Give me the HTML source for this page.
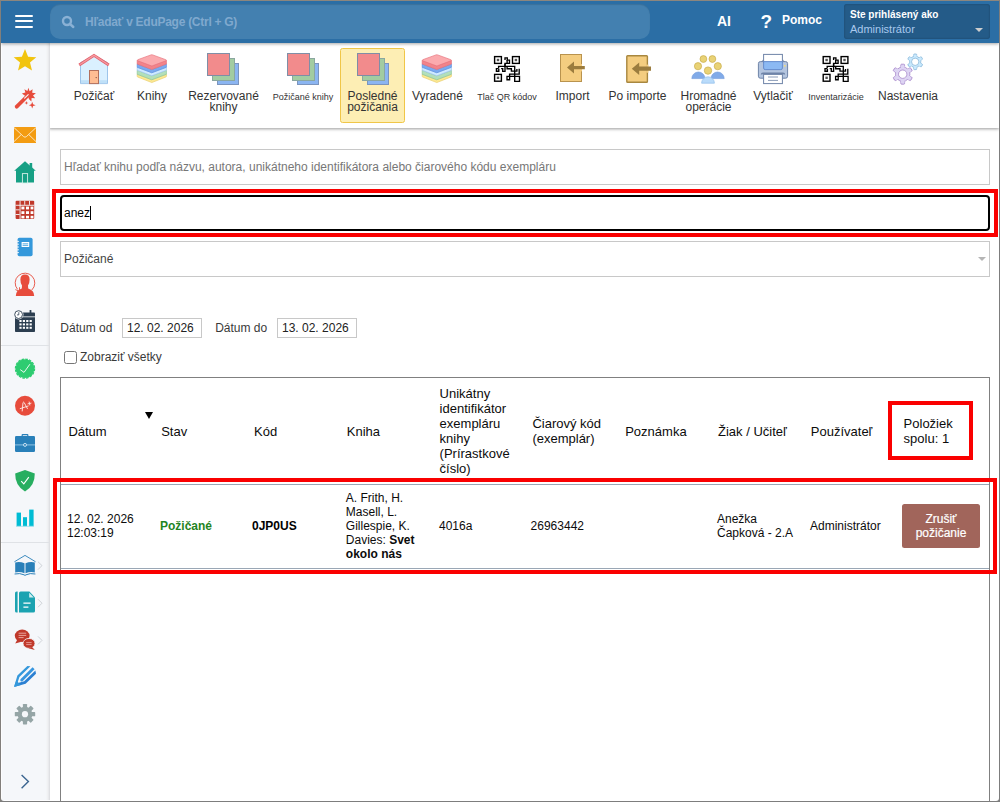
<!DOCTYPE html>
<html lang="sk">
<head>
<meta charset="utf-8">
<title>EduPage - Knižnica</title>
<style>
*{box-sizing:border-box;margin:0;padding:0}
html,body{width:1000px;height:802px;overflow:hidden;background:#fff}
body{font-family:"Liberation Sans",Arial,sans-serif;font-size:12px;color:#222;position:relative}
#frame{position:absolute;left:0;top:0;width:1000px;height:802px;border:1px solid #7d7d7d;border-top-color:#8c867e;border-left-color:#827f7b;z-index:50;pointer-events:none;overflow:hidden}
#frame:after{content:"";position:absolute;left:0;top:0;right:0;bottom:0;border-radius:0 0 3px 3px;box-shadow:0 0 0 3px #7d7d7d}
#header{position:absolute;left:1px;top:1px;width:998px;height:42px;background:#2b6ea5;z-index:10;box-shadow:0 1px 3px rgba(0,0,0,.35)}
#burger{position:absolute;left:13.5px;top:13.5px;width:18px;height:13px}
#burger i{position:absolute;left:0;width:18px;height:2px;background:#fff;border-radius:1px}
#gsearch{position:absolute;left:48.8px;top:3.3px;width:600px;height:34.9px;border-radius:10px;background:#4380b0;box-shadow:inset 0 1px 1px rgba(0,0,0,.12);color:#80a9ce;font-weight:bold;font-size:12px}
#gsearch span{position:absolute;left:35.2px;top:10.7px;white-space:nowrap;letter-spacing:-0.27px}
.hl{position:absolute;color:#fff;font-weight:bold;white-space:nowrap}
#user{position:absolute;left:843px;top:3px;width:146px;height:35px;border-radius:3px;background:#245b88;box-shadow:inset 0 0 2px rgba(0,0,0,.3)}
#user b{position:absolute;left:6px;top:5px;font-size:10px;color:#fff;white-space:nowrap}
#user span{position:absolute;left:6px;top:19px;font-size:11px;color:#a9c9ee;white-space:nowrap}
#user i{position:absolute;left:131px;top:24.3px;width:0;height:0;border-left:4px solid transparent;border-right:4px solid transparent;border-top:4.6px solid #cdcdcd}
#side{position:absolute;left:1px;top:43px;width:49px;height:758px;background:linear-gradient(to right,#f5f7fa 0,#f5f7fa 43.5px,#f3f5f7 44.5px,#f0f1f3 45.5px,#e9eaed 46.5px,#dfe0e3 47.5px,#dedfe2 48px);border-left:1px solid #fdfdfe;border-bottom:1px solid #fdfdfe;z-index:5}
#side svg{position:absolute;left:-1px !important}
#side hr{position:absolute;left:0;width:48px;border:0;border-top:1px solid #e3e6ea}
#toolbar{position:absolute;left:49px;top:43px;width:950px;height:85px;background:#fff;box-shadow:0 1px 3px rgba(0,0,0,.4);z-index:4}
.tl{position:absolute;top:48px;width:120px;text-align:center;font-size:12px;line-height:11px;color:#333;white-space:nowrap}
.tl.sm{font-size:9px;top:49px}
#tsel{position:absolute;left:291px;top:5px;width:65px;height:75px;background:#fdeeb4;border:1px solid #f0c648;border-radius:2.5px}
#main{position:absolute;left:49px;top:128px;width:950px;height:673px;background:#fff}
.inp{position:absolute;left:11px;width:930px;height:36px;border:1px solid #c8c8c8;background:#fff;font-size:12px;line-height:34px;padding-left:3px;color:#777}
.red{position:absolute;border:4px solid #fa0000}
.lbl{position:absolute;font-size:12px;color:#3a3a3a;white-space:nowrap}
.dt{position:absolute;height:20px;width:80px;border:1px solid #c8c8c8;font-size:12px;line-height:18px;padding-left:4px;color:#222}
#tbl{position:absolute;left:11px;top:249px;width:930px;height:430px;border:1px solid #808080;border-bottom:0}
.th{position:absolute;top:250px;height:106px;display:flex;align-items:center;font-size:13px;line-height:15px;color:#0c0c0c}
.td{position:absolute;top:356px;height:84px;display:flex;align-items:center;font-size:12px;line-height:14px;color:#0c0c0c}
.td b{font-weight:bold}
.rl{position:absolute;left:12px;width:928px;height:1px;background:#9aa7b5}
#btn{position:absolute;left:853px;top:376px;width:78px;height:44px;border-radius:2.5px;-webkit-text-stroke:0.2px #fff;background:#a1655b;color:#fff;font-size:12px;font-weight:normal;line-height:14px;text-align:center;padding-top:8px}
</style>
</head>
<body>
<div id="header">
  <div id="burger"><i style="top:0"></i><i style="top:5.5px"></i><i style="top:11px"></i></div>
  <div id="gsearch">
    <svg width="16" height="16" viewBox="0 0 16 16" style="position:absolute;left:11.2px;top:10.8px"><circle cx="6" cy="6" r="4" fill="none" stroke="#8ab1d5" stroke-width="2.4"/><path d="M9 9 L12.3 12" stroke="#8ab1d5" stroke-width="2.4" stroke-linecap="round"/></svg>
    <span>Hľadať v EduPage (Ctrl + G)</span>
  </div>
  <div class="hl" style="left:716px;top:12px;font-size:14px">AI</div>
  <div class="hl" style="left:759.5px;top:9.5px;font-size:19px">?</div>
  <div class="hl" style="left:781px;top:12px;font-size:12px">Pomoc</div>
  <div id="user"><b>Ste prihlásený ako</b><span>Administrátor</span><i></i></div>
</div>

<div id="side">
<svg width="48" height="758" viewBox="1 43 48 758" style="left:0;top:0">
  <!-- star -->
  <polygon fill="#f1c40f" points="25.0,49.1 28.1,56.7 36.3,57.3 30.0,62.6 32.0,70.6 25.0,66.3 18.0,70.6 20.0,62.6 13.7,57.3 21.9,56.7"/>
  <!-- wand -->
  <g fill="#e74c3c">
    <path d="M15.2 105.6 L26.6 94.2 L29.2 96.8 L17.8 108.2 Q16.5 109.2 15.3 108.1 Q14.2 106.9 15.2 105.6Z"/>
    <polygon points="28.4,87.8 29.6,91.2 32.6,89.2 32.2,92.8 35.9,93.2 33,95.4 35.2,98.2 31.6,98 31.4,101.6 28.9,99 28,96 25,95.8 21.9,93.6 25.4,92.6 24.4,89.2 27.4,91"/>
    <polygon points="32.2,101.8 33.1,104.3 35.6,105.2 33.1,106.1 32.2,108.6 31.3,106.1 28.8,105.2 31.3,104.3"/>
    <polygon points="26.4,101 26.9,102.4 28.3,102.9 26.9,103.4 26.4,104.8 25.9,103.4 24.5,102.9 25.9,102.4"/>
  </g>
  <path d="M24.6 98.2 L28.2 94.6" stroke="#f5f7fa" stroke-width="1.1" stroke-linecap="round"/>
  <!-- mail -->
  <rect x="14" y="127" width="22" height="16" fill="#f39c12"/>
  <path d="M14 127.6 L23.6 136.6 Q25 137.8 26.4 136.6 L36 127.6 M14 141.6 L21.2 134.6 M36 141.6 L28.8 134.6" fill="none" stroke="#fdebd0" stroke-width="0.9"/>
  <!-- home -->
  <g fill="#16a085">
    <polygon points="25,161.3 35.8,170.8 14.2,170.8"/>
    <rect x="16" y="169.5" width="18" height="13"/>
    <rect x="29.6" y="163" width="2.6" height="6"/>
  </g>
  <rect x="22.4" y="173.6" width="5.2" height="9.4" fill="#16a085" stroke="#d5efe9" stroke-width="0.9"/>
  <!-- grid -->
  <g fill="#c0392b">
    <rect x="15.6" y="200.8" width="18.6" height="18.2" rx="1"/>
  </g>
  <g fill="#f5f7fa">
    <rect x="19.6" y="200.8" width="0.9" height="18.2"/><rect x="24.3" y="200.8" width="0.9" height="4"/><rect x="29" y="200.8" width="0.9" height="4"/>
    <rect x="15.6" y="204.8" width="18.6" height="0.9"/><rect x="15.6" y="209.4" width="4" height="0.9"/><rect x="15.6" y="214" width="4" height="0.9"/>
  </g>
  <g fill="#fff">
    <rect x="21.4" y="206.6" width="3" height="2.8"/><rect x="26" y="206.6" width="3" height="2.8"/><rect x="30.6" y="206.6" width="2.8" height="2.8"/>
    <rect x="21.4" y="211.2" width="3" height="2.8"/><rect x="26" y="211.2" width="3" height="2.8"/><rect x="30.6" y="211.2" width="2.8" height="2.8"/>
    <rect x="21.4" y="215.8" width="3" height="2.6"/><rect x="26" y="215.8" width="3" height="2.6"/><rect x="30.6" y="215.8" width="2.8" height="2.6"/>
  </g>
  <!-- notebook -->
  <rect x="17.6" y="237.8" width="15" height="18.4" rx="1.8" fill="#3498db"/>
  <g stroke="#f5f7fa" stroke-width="0.9"><path d="M16.4 241.4h2.6M16.4 244.2h2.6M16.4 247h2.6M16.4 249.8h2.6M16.4 252.6h2.6"/></g>
  <rect x="21.6" y="242" width="7.6" height="5" fill="#fff"/>
  <path d="M22.6 243.8h5.6M22.6 245.4h5.6" stroke="#3498db" stroke-width="0.8"/>
  <!-- person -->
  <g fill="#e74c3c">
    <path d="M20.4 279.6 Q20.4 274.6 25 274.6 Q29.6 274.6 29.6 279.6 Q29.6 283.6 28 285.6 L28.2 288.6 Q34.2 290.6 34.2 296 H15.8 Q15.8 290.6 21.8 288.6 L22 285.6 Q20.4 283.6 20.4 279.6Z"/>
  </g>
  <path d="M31.8 290 A9.8 9.8 0 1 0 17.6 289.4" fill="none" stroke="#e74c3c" stroke-width="0.9"/>
  <path d="M15.4 289.6 L19.4 291.4 L19.6 287.2" fill="none" stroke="#e74c3c" stroke-width="0.9"/>
  <!-- calendar -->
  <g fill="#2c3e50">
    <rect x="15" y="312.4" width="20" height="19.6" rx="0.8"/>
    <rect x="29.6" y="310" width="1.8" height="4.4" rx="0.6"/>
  </g>
  <path d="M22.4 316.8h12.6" stroke="#f5f7fa" stroke-width="0.8"/>
  <circle cx="18.6" cy="314.6" r="4.3" fill="#f5f7fa" stroke="#f5f7fa" stroke-width="1.2"/>
  <circle cx="18.6" cy="314.6" r="3.9" fill="#fff" stroke="#2c3e50" stroke-width="0.9"/>
  <path d="M18.8 312.2V314.9H17" fill="none" stroke="#2c3e50" stroke-width="0.8"/>
  <g fill="#fff">
    <rect x="19.4" y="320" width="2.2" height="2"/><rect x="22.8" y="320" width="2.2" height="2"/><rect x="26.2" y="320" width="2.2" height="2"/><rect x="29.6" y="320" width="2.2" height="2"/>
    <rect x="19.4" y="323.4" width="2.2" height="2"/><rect x="22.8" y="323.4" width="2.2" height="2"/><rect x="26.2" y="323.4" width="2.2" height="2"/><rect x="29.6" y="323.4" width="2.2" height="2"/>
    <rect x="19.4" y="326.8" width="2.2" height="2"/><rect x="22.8" y="326.8" width="2.2" height="2"/><rect x="26.2" y="326.8" width="2.2" height="2"/><rect x="29.6" y="326.8" width="2.2" height="2"/>
  </g>
  <!-- hr -->
  <rect x="1" y="345" width="48" height="1" fill="#dfe2e6"/>
  <!-- check badge -->
  <circle cx="25" cy="368.6" r="9.4" fill="#2ecc71"/>
  <circle cx="25" cy="368.6" r="9.5" fill="none" stroke="#2ecc71" stroke-width="1.4" stroke-dasharray="2.6 1.13"/>
  <path d="M20.2 369.6 L24 372.4 L29.9 364.2" fill="none" stroke="#f2fbf5" stroke-width="0.95"/>
  <!-- A+ -->
  <circle cx="25" cy="405.8" r="10" fill="#e74c3c"/>
  <path d="M22.2 411 L23 402.6 Q23.6 401.6 24.2 402.6 L27.4 408.6 M20.2 408.6 L28.2 406 M28 403.8 L31 403.2 M29.2 402 L29.8 405" fill="none" stroke="#fbe6e3" stroke-width="0.95" stroke-linecap="round"/>
  <!-- briefcase -->
  <g fill="#2980b9">
    <rect x="15" y="436" width="20" height="16" rx="1.2"/>
    <path d="M21.6 436.4v-1.4q0-1 1-1h4.8q1 0 1 1v1.4h-1.2v-1.2h-4.4v1.2z"/>
  </g>
  <rect x="15" y="444.4" width="20" height="1" fill="#8fc0e2"/>
  <circle cx="25" cy="444.9" r="1.5" fill="#2980b9" stroke="#d6e9f5" stroke-width="0.9"/>
  <!-- shield -->
  <path d="M25 470 L34.8 473.4 Q35 485.6 25 491.4 Q15 485.6 15.2 473.4Z" fill="#27ae60"/>
  <path d="M21.2 481.2 L23.8 483.8 L28.8 477.2" fill="none" stroke="#fff" stroke-width="1.1"/>
  <!-- chart -->
  <g fill="#00bcd4">
    <rect x="16.6" y="512.6" width="4.4" height="13.6"/><rect x="23" y="517.2" width="4" height="9"/><rect x="29.2" y="509.6" width="4.4" height="16.6"/>
  </g>
  <rect x="16" y="525.8" width="18" height="0.8" fill="#8fdde8"/>
  <!-- hr -->
  <rect x="1" y="542" width="48" height="1" fill="#dfe2e6"/>
  <!-- book -->
  <path d="M14.4 561.8 L25 555.4 L35.6 561.8" fill="none" stroke="#2980b9" stroke-width="0.9"/>
  <g fill="#2980b9">
    <path d="M15.2 562.4 Q20 561.4 24.5 563.2 V573.2 Q20 571.4 15.2 572.4Z"/>
    <path d="M34.8 562.4 Q30 561.4 25.5 563.2 V573.2 Q30 571.4 34.8 572.4Z"/>
  </g>
  <path d="M14.6 574 Q20 572.8 24 574.8 Q25 576 26 574.8 Q30 572.8 35.4 574" fill="none" stroke="#2980b9" stroke-width="1"/>
  <!-- doc -->
  <g fill="#1ba3b1">
    <path d="M17.6 591.6 V612.6 H16.6 Q15 612.6 15 611 V593.2 Q15 591.6 16.6 591.6Z"/>
    <path d="M19 593.2 Q19 591.6 20.6 591.6 H29.4 L35 597.4 V611 Q35 612.6 33.4 612.6 H19Z"/>
  </g>
  <path d="M29.2 592.8 V597.6 H33.8Z" fill="#d3eef1"/>
  <path d="M23.4 603.2h7.2M23.4 607.2h5" stroke="#fff" stroke-width="1.3"/>
  <!-- chat -->
  <g fill="#c0392b">
    <ellipse cx="22.2" cy="635.8" rx="7.4" ry="6.2"/>
    <path d="M17.4 639.6 L15.2 643.6 L21.4 641.8Z"/>
    <ellipse cx="29" cy="643.4" rx="6" ry="5" stroke="#f5f7fa" stroke-width="0.8"/>
    <path d="M32 647 L34.8 650 L28.6 648.3Z"/>
  </g>
  <path d="M18.6 633.2h7.6M18.6 635.4h7.6M18.6 637.6h5" stroke="#eeb0a9" stroke-width="0.9"/>
  <path d="M26.2 642.6h5.4M26.2 644.6h5.4" stroke="#eeb0a9" stroke-width="0.8"/>
  <!-- chevrons -->
  <g fill="none" stroke="#cfd3d8" stroke-width="1">
    <path d="M38 561.8 L42 565.6 L38 569.6"/><path d="M38 599.2 L42 603.2 L38 607.2"/><path d="M38 636.4 L42 640.4 L38 644.4"/>
  </g>
  <!-- pen -->
  <g>
    <path d="M14 687 L17.4 675.6 L27.4 666 L30.4 666.2 L19.4 677 L17.6 682.4Z" fill="#3498db"/>
    <path d="M14 687 L25.6 683.8 L36 673.8 L35.4 670.6 L24.2 681.2 L18.8 682.8Z" fill="#2b80d2"/>
    <path d="M20.7 679 L32.6 667.2 L34.6 669.2 L22.8 681 Q21.4 682 20.6 681 Q19.8 680 20.7 679Z" fill="#3796df"/>
    <path d="M14 687 L16.3 680.4 L20.8 684.9Z" fill="#3498db"/>
  </g>
  <!-- gear -->
  <g transform="translate(25 714.2)">
    <g fill="#95a5a6">
      <circle r="7.4"/>
      <g id="sgt"><rect x="-2.1" y="-10.2" width="4.2" height="4.4" rx="0.6"/></g>
      <rect x="-2.1" y="-10.2" width="4.2" height="4.4" rx="0.6" transform="rotate(45)"/>
      <rect x="-2.1" y="-10.2" width="4.2" height="4.4" rx="0.6" transform="rotate(90)"/>
      <rect x="-2.1" y="-10.2" width="4.2" height="4.4" rx="0.6" transform="rotate(135)"/>
      <rect x="-2.1" y="-10.2" width="4.2" height="4.4" rx="0.6" transform="rotate(180)"/>
      <rect x="-2.1" y="-10.2" width="4.2" height="4.4" rx="0.6" transform="rotate(225)"/>
      <rect x="-2.1" y="-10.2" width="4.2" height="4.4" rx="0.6" transform="rotate(270)"/>
      <rect x="-2.1" y="-10.2" width="4.2" height="4.4" rx="0.6" transform="rotate(315)"/>
    </g>
    <circle r="3.1" fill="#f5f7fa"/>
  </g>
  <!-- bottom chevron -->
  <path d="M21.6 775 L28.4 781.6 L21.6 788.2" fill="none" stroke="#3b6590" stroke-width="1.4"/>
</svg>
</div>

<div id="toolbar">
  <div id="tsel"></div>
<svg width="950" height="85" viewBox="49 43 950 85" style="position:absolute;left:0;top:0">
  <defs>
    <g id="stk">
      <rect x="10.5" y="10.5" width="21" height="21" fill="#8bb5f1" stroke="#7c95bd"/>
      <rect x="5.5" y="5.5" width="22" height="22" fill="#a2cca1" stroke="#8aa7a0"/>
      <rect x="0.5" y="0.5" width="22" height="22" fill="#f28b8c" stroke="#7f8ea6"/>
    </g>
    <g id="bks" stroke-linejoin="round">
      <path d="M0.6 19.65 L15.2 25.15 L29.8 19.65 V21.75 Q29.8 22.15 29.2 22.45 L15.2 27.95 L1.2 22.45 Q0.6 22.15 0.6 21.75Z" fill="#fde992" stroke="#e8cf6e" stroke-width="0.7"/>
      <path d="M0.6 15.65 L15.2 21.15 L29.8 15.65 V19.65 L15.2 25.15 L0.6 19.65Z" fill="#b2dfba" stroke="#8cc79a" stroke-width="0.7"/>
      <path d="M0.6 12.65 L15.2 18.15 L29.8 12.65 V15.65 L15.2 21.15 L0.6 15.65Z" fill="#cfeaff" stroke="#9dc6f0" stroke-width="0.7"/>
      <path d="M0.6 9.40 L15.2 14.90 L29.8 9.40 V12.65 L15.2 18.15 L0.6 12.65Z" fill="#7aaaf0" stroke="#5d8fe0" stroke-width="0.7"/>
      <path d="M0.6 5.70 L15.2 11.20 L29.8 5.70 V9.40 L15.2 14.90 L0.6 9.40Z" fill="#f2838a" stroke="#e4707a" stroke-width="0.7"/>
      <path d="M1.2 5.1 Q0.4 5.7 1.2 6.2 L14.4 11.1 Q15.2 11.4 16 11.1 L29.2 6.2 Q30 5.7 29.2 5.1 L16 0.3 Q15.2 0 14.4 0.3Z" fill="#fbaaae" stroke="#e8747e" stroke-width="0.7"/>
      </g>
    <g id="qr" fill="none" stroke="#000" stroke-width="1.4">
      <rect x="0.9" y="0.9" width="6.8" height="6.8"/><rect x="18.8" y="0.9" width="6.8" height="6.8"/><rect x="0.9" y="18.7" width="6.8" height="6.8"/>
      <g fill="#555" stroke="none"><rect x="3.1" y="3.1" width="2.4" height="2.4"/><rect x="21" y="3.1" width="2.4" height="2.4"/><rect x="3.1" y="20.9" width="2.4" height="2.4"/></g>
      <g stroke-width="1.35">
      <path d="M11.3 4.4V2.2H13.6V4.4H15.8V7.6H11.3V10.4"/>
      <path d="M13.4 4.4V7.4"/>
      <path d="M4.9 12.6V10.7H21V25.7H25.8V20.7H13.3V24H15.9V18.4H25.5V13"/>
      <path d="M4.9 12.9H2.7V15.5H5.1V13"/>
      <path d="M7.4 12.9H9V15.6H11.3V8"/>
      <path d="M13.4 10.8V13H17.7V15.4H23.2V13.2"/>
      </g>
    </g>
    <g id="gt6"><rect x="-1.9" y="-10" width="3.8" height="4" rx="0.8"/></g>
  </defs>
  <!-- house -->
  <path d="M80.5 62.6 L94 55.4 L107.5 62.6 V83.6 H80.5Z" fill="#daf0ff" stroke="#9dc4ea" stroke-width="1"/>
  <rect x="81" y="80.2" width="26" height="3" fill="#bfe0f8"/>
  <path d="M79.2 65 L94 55.4 L108.8 65" fill="none" stroke="#e45f6a" stroke-width="2.9" stroke-linejoin="miter"/>
  <path d="M79.6 64.8 L94 55.4 L108.4 64.8" fill="none" stroke="#f59aa0" stroke-width="1.3"/>
  <rect x="89.5" y="70.5" width="9" height="13.1" fill="#ffbd93" stroke="#b3705c" stroke-width="1"/>
  <circle cx="96.2" cy="77.6" r="0.7" fill="#7a4a3a"/>
  <!-- books -->
  <use href="#bks" x="136.6" y="54.6"/>
  <!-- stacks -->
  <use href="#stk" x="207" y="53"/>
  <use href="#stk" x="287" y="53"/>
  <use href="#stk" x="357" y="53"/>
  <use href="#bks" x="421.6" y="54.6"/>
  <use href="#qr" x="493.7" y="55.7"/>
  <!-- import -->
  <rect x="560.5" y="54.5" width="21" height="27" fill="#f4cd80" stroke="#b9934e"/>
  <rect x="580.6" y="64" width="1.4" height="7.4" fill="#f4cd80"/>
  <path d="M567 67.6 L574 61.6 V66 H584.8 V69.2 H574 V73.6Z" fill="#9b7c3e"/>
  <!-- po importe -->
  <rect x="626.8" y="55.8" width="20.6" height="26.4" rx="0.8" fill="#f4cd80" stroke="#a8873f" stroke-width="1.4"/>
  <rect x="646.4" y="64.6" width="2" height="8.2" fill="#f4cd80"/>
  <path d="M631.8 68.7 L639.2 62.4 V66.6 H651 V70.8 H639.2 V75Z" fill="#9b7c3e"/>
  <!-- people -->
  <g>
    <path d="M691.8 78.6 A6.6 6.6 0 0 1 705 78.6Z" fill="#80aae8" stroke="#6c97da" stroke-width="0.6"/>
    <path d="M711 78.6 A6.6 6.6 0 0 1 724.2 78.6Z" fill="#80aae8" stroke="#6c97da" stroke-width="0.6"/>
    <path d="M701.6 83.2 A6.4 6.4 0 0 1 714.4 83.2Z" fill="#b9dbfa" stroke="#8fbdeb" stroke-width="0.7"/>
    <g fill="#e9d275" stroke="#c9ae4e" stroke-width="0.7">
      <circle cx="703.4" cy="59" r="3.4"/><circle cx="712.4" cy="59" r="3.4"/>
      <circle cx="698" cy="66.2" r="3.6"/><circle cx="717.8" cy="66.2" r="3.6"/>
      <circle cx="708" cy="70.6" r="3.7"/>
    </g>
  </g>
  <!-- printer -->
  <g>
    <path d="M762.4 62.5 L763.5 60 M783.6 62.5 L782.5 60" stroke="#6f84a8" stroke-width="1.6"/>
    <rect x="758.4" y="61.6" width="29.2" height="16.6" rx="2" fill="#b4c5df" stroke="#6f84a8" stroke-width="1"/>
    <rect x="763.6" y="54.4" width="18.8" height="8" fill="#fff" stroke="#6f84a8" stroke-width="1"/>
    <path d="M763.6 61.6 H782.4 V68 Q782.4 69.6 780.8 69.6 H765.2 Q763.6 69.6 763.6 68Z" fill="#8cb9f3" stroke="#5f87c9" stroke-width="0.9"/>
    <circle cx="784.8" cy="65.8" r="0.9" fill="#f7df6f"/>
    <path d="M761.6 74.6 Q761.6 73.2 763 73.2 H783 Q784.4 73.2 784.4 74.6" fill="none" stroke="#6f84a8" stroke-width="1.6"/>
    <rect x="763.6" y="74.4" width="18.8" height="9.2" fill="#fff" stroke="#6f84a8" stroke-width="1"/>
    <path d="M768 77 H778 M768 80.4 H778" stroke="#8b9cb8" stroke-width="1"/>
  </g>
  <use href="#qr" x="822.3" y="55.7"/>
  <!-- gears -->
  <g transform="translate(902.7 74.2)" fill="#ddd4f3" stroke="#a686c9" stroke-width="0.8">
    <use href="#gt6"/><use href="#gt6" transform="rotate(60)"/><use href="#gt6" transform="rotate(120)"/><use href="#gt6" transform="rotate(180)"/><use href="#gt6" transform="rotate(240)"/><use href="#gt6" transform="rotate(300)"/>
    <circle r="7.2"/>
    <g stroke="none"><use href="#gt6" transform="translate(0 1.2)"/><use href="#gt6" transform="rotate(60) translate(0 1.2)"/><use href="#gt6" transform="rotate(120) translate(0 1.2)"/><use href="#gt6" transform="rotate(180) translate(0 1.2)"/><use href="#gt6" transform="rotate(240) translate(0 1.2)"/><use href="#gt6" transform="rotate(300) translate(0 1.2)"/></g>
    <circle r="4.2" fill="#fff"/>
  </g>
  <g transform="translate(915.2 61.8) scale(0.78)" fill="#c9e9fd" stroke="#86b6d9" stroke-width="1">
    <use href="#gt6"/><use href="#gt6" transform="rotate(60)"/><use href="#gt6" transform="rotate(120)"/><use href="#gt6" transform="rotate(180)"/><use href="#gt6" transform="rotate(240)"/><use href="#gt6" transform="rotate(300)"/>
    <circle r="7.2"/>
    <g stroke="none"><use href="#gt6" transform="translate(0 1.2)"/><use href="#gt6" transform="rotate(60) translate(0 1.2)"/><use href="#gt6" transform="rotate(120) translate(0 1.2)"/><use href="#gt6" transform="rotate(180) translate(0 1.2)"/><use href="#gt6" transform="rotate(240) translate(0 1.2)"/><use href="#gt6" transform="rotate(300) translate(0 1.2)"/></g>
    <circle r="4.7" fill="#fff"/>
  </g>
</svg>
  <div class="tl" style="left:-15px">Požičať</div>
  <div class="tl" style="left:43px">Knihy</div>
  <div class="tl" style="left:114.5px">Rezervované<br>knihy</div>
  <div class="tl sm" style="left:194px">Požičané knihy</div>
  <div class="tl" style="left:263.5px">Posledné<br>požičania</div>
  <div class="tl" style="left:328.5px">Vyradené</div>
  <div class="tl sm" style="left:398px">Tlač QR kódov</div>
  <div class="tl" style="left:463.5px">Import</div>
  <div class="tl" style="left:528.5px">Po importe</div>
  <div class="tl" style="left:599.5px">Hromadné<br>operácie</div>
  <div class="tl" style="left:664px">Vytlačiť</div>
  <div class="tl sm" style="left:727px">Inventarizácie</div>
  <div class="tl" style="left:799px">Nastavenia</div>
</div>

<div id="main">
  <div class="inp" style="top:21px">Hľadať knihu podľa názvu, autora, unikátneho identifikátora alebo čiarového kódu exempláru</div>
  <div class="red" style="left:3px;top:61px;width:946px;height:48px"></div>
  <div class="inp" style="top:67px;border:2px solid #000;border-radius:4px;color:#000;line-height:32px;padding-left:2px">anez<i style="display:inline-block;width:1px;height:14px;background:#000;vertical-align:-3px"></i></div>
  <div class="inp" style="top:113px;color:#444">Požičané<i style="position:absolute;right:3px;top:15px;border-left:4px solid transparent;border-right:4px solid transparent;border-top:4px solid #b5b5b5"></i></div>

  <div class="lbl" style="left:11.3px;top:193px">Dátum od</div>
  <div class="dt" style="left:73px;top:190px">12. 02. 2026</div>
  <div class="lbl" style="left:166.2px;top:193px">Dátum do</div>
  <div class="dt" style="left:228px;top:190px">13. 02. 2026</div>
  <div style="position:absolute;left:15px;top:223px;width:13px;height:13px;border:1px solid #767676;border-radius:2.5px;background:#fff"></div>
  <div class="lbl" style="left:31px;top:222px">Zobraziť všetky</div>

  <div id="tbl"></div>
  <div class="th" style="left:19.4px"><span>Dátum</span></div>
  <div style="position:absolute;left:96px;top:283.5px;border-left:4px solid transparent;border-right:4px solid transparent;border-top:7px solid #000"></div>
  <div class="th" style="left:112.2px"><span>Stav</span></div>
  <div class="th" style="left:205.0px"><span>Kód</span></div>
  <div class="th" style="left:297.8px"><span>Kniha</span></div>
  <div class="th" style="left:390.6px"><span>Unikátny<br>identifikátor<br>exempláru<br>knihy<br>(Prírastkové<br>číslo)</span></div>
  <div class="th" style="left:483.4px"><span>Čiarový kód<br>(exemplár)</span></div>
  <div class="th" style="left:576.2px"><span>Poznámka</span></div>
  <div class="th" style="left:669.0px"><span>Žiak / Učiteľ</span></div>
  <div class="th" style="left:761.8px"><span>Používateľ</span></div>
  <div class="th" style="left:854.6px"><span>Položiek<br>spolu: 1</span></div>
  <div class="red" style="left:839px;top:273px;width:85px;height:59px"></div>

  <div class="rl" style="top:356px"></div>
  <div class="rl" style="top:440px"></div>
  <div class="td" style="left:18px"><span>12. 02. 2026<br>12:03:19</span></div>
  <div class="td" style="left:111px;color:#1f841f;font-weight:bold"><span>Požičané</span></div>
  <div class="td" style="left:203px;font-weight:bold;color:#000"><span>0JP0US</span></div>
  <div class="td" style="left:296.8px"><span>A. Frith, H.<br>Masell, L.<br>Gillespie, K.<br>Davies: <b>Svet<br>okolo nás</b></span></div>
  <div class="td" style="left:390px"><span>4016a</span></div>
  <div class="td" style="left:481.6px"><span>26963442</span></div>
  <div class="td" style="left:668px"><span>Anežka<br>Čapková - 2.A</span></div>
  <div class="td" style="left:761px"><span>Administrátor</span></div>
  <div id="btn">Zrušiť<br>požičanie</div>
  <div class="red" style="left:4px;top:350px;width:944px;height:96px"></div>
</div>
<div id="frame"></div>
</body>
</html>
